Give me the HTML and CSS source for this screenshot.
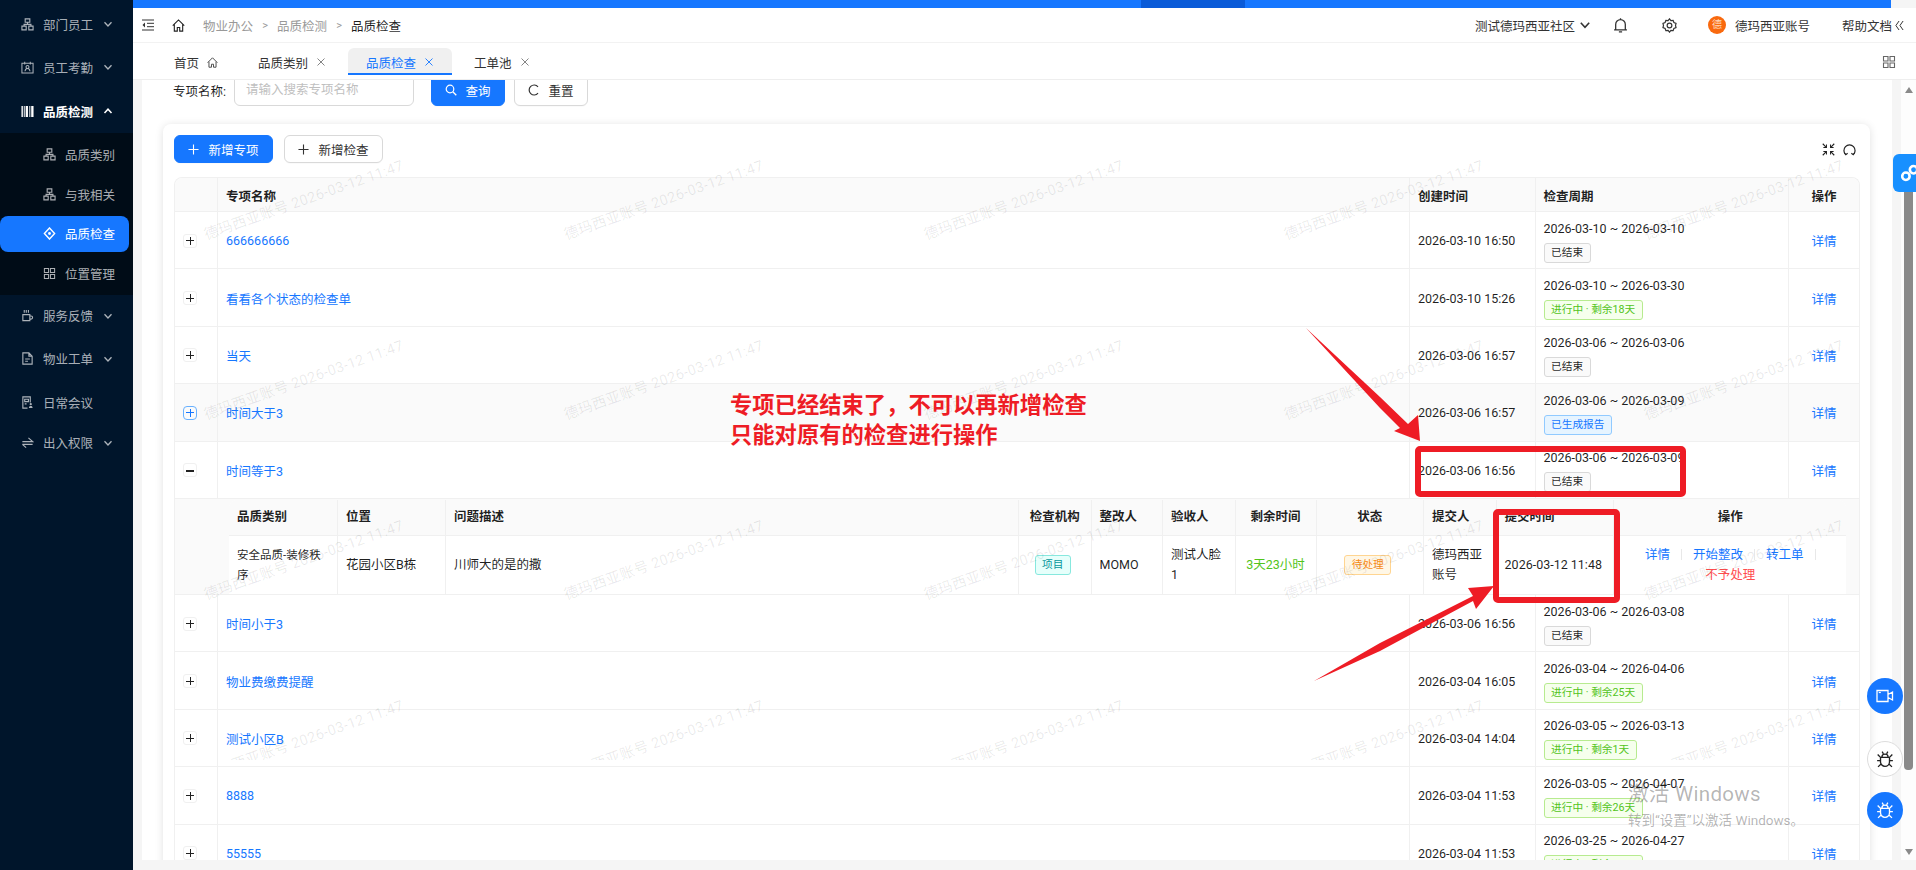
FILE: index.html
```html
<!DOCTYPE html>
<html lang="zh-CN">
<head>
<meta charset="utf-8">
<title>品质检查</title>
<link rel="stylesheet" href="styles.css">
</head>
<body>
<svg class="sprite" xmlns="http://www.w3.org/2000/svg">
  <symbol id="i-org" viewBox="0 0 14 14"><path d="M4.5 1h5v3.6h-5zM1 8.8h4.6v4H1zM8.4 8.8H13v4H8.4zM7 4.6v2.3M3.3 8.8V6.9h7.4v1.900" fill="none" stroke="currentColor" stroke-width="1.200"/></symbol>
  <symbol id="i-cal" viewBox="0 0 14 14"><path d="M1 2.5h12v10.500H1zM4 .8v3M10 .8v3M4.300 11c.3-2 1.300-3 2.700-3s2.400 1 2.700 3M7 8a1.600 1.600 0 1 0 0-3.200A1.600 1.600 0 0 0 7 8z" fill="none" stroke="currentColor" stroke-width="1.100"/></symbol>
  <symbol id="i-bar" viewBox="0 0 14 14"><path d="M.5 1h1.500v12H.5zM3 1h1v12H3zM5 1h2.500v12H5zM9 1h1v12H9zM11 1h2.500v12H11z" fill="currentColor"/></symbol>
  <symbol id="i-cup" viewBox="0 0 14 14"><path d="M2 6h7.500v6.500H2zM9.500 7.500h1.300a1.700 1.700 0 0 1 0 3.400H9.500M3.500 1v3M5.700 1v3M8 1v3" fill="none" stroke="currentColor" stroke-width="1.200"/></symbol>
  <symbol id="i-doc" viewBox="0 0 14 14"><path d="M2 1h6.500L12 4.500V13H2zM8.500 1v3.500H12M4.500 7.500h5M4.500 10h3" fill="none" stroke="currentColor" stroke-width="1.200"/></symbol>
  <symbol id="i-meet" viewBox="0 0 14 14"><path d="M10 7V1H2v12h5M4 3.500h4v2.500H4zM4 8.500h2" fill="none" stroke="currentColor" stroke-width="1.200"/><path d="M8.500 13c0-1.600.7-2.300 2-2.300s2 .7 2 2.300zM10.500 10a1.200 1.200 0 1 0 0-2.400 1.200 1.200 0 0 0 0 2.400z" fill="currentColor"/></symbol>
  <symbol id="i-swap" viewBox="0 0 14 14"><path d="M1.500 6h11L8 2M12.500 9h-11M1.500 9l4 3.500" fill="none" stroke="currentColor" stroke-width="1.200"/></symbol>
  <symbol id="i-diamond" viewBox="0 0 14 14"><path d="M7 1l5.500 6L7 13 1.500 7z" fill="none" stroke="currentColor" stroke-width="1.500"/><circle cx="7" cy="7" r="1.500" fill="currentColor"/></symbol>
  <symbol id="i-grid" viewBox="0 0 14 14"><path d="M1.500 1.500h4.500V6H1.500zM8 1.500h4.500V6H8zM1.500 8H6v4.500H1.500zM8 8h4.500v4.500H8z" fill="none" stroke="currentColor" stroke-width="1.100"/></symbol>
  <symbol id="i-down" viewBox="0 0 10 10"><path d="M1.500 3.200L5 7l3.500-3.800" fill="none" stroke="currentColor" stroke-width="1.300"/></symbol>
  <symbol id="i-up" viewBox="0 0 10 10"><path d="M1.500 7L5 3.200 8.500 7" fill="none" stroke="currentColor" stroke-width="1.500"/></symbol>
  <symbol id="i-menu" viewBox="0 0 12 12"><path d="M0 1h12M5 4.300h7M5 7.700h7M0 11h12" fill="none" stroke="currentColor" stroke-width="1"/><path d="M3 3.500L.5 6 3 8.500z" fill="currentColor"/></symbol>
  <symbol id="i-home" viewBox="0 0 14 14"><path d="M.8 7.200L7 1l6.200 6.200M2.500 6v7h3.200V9.200h2.600V13h3.200V6" fill="none" stroke="currentColor" stroke-width="1.200"/></symbol>
  <symbol id="i-bell" viewBox="0 0 14 14"><path d="M2.500 11V6a4.500 4.500 0 0 1 9 0v5zM1 11h12M5.500 13h3M7 .3v1.300" fill="none" stroke="currentColor" stroke-width="1.200"/></symbol>
  <symbol id="i-gear" viewBox="0 0 14 14"><path d="M7 .8l1.300 1.700 2.100-.3.700 2 2 .8-.5 2 .5 2-2 .8-.7 2-2.100-.3L7 13.200l-1.300-1.700-2.100.3-.7-2-2-.8.500-2-.5-2 2-.8.700-2 2.100.3z" fill="none" stroke="currentColor" stroke-width="1.100"/><circle cx="7" cy="7" r="2.200" fill="none" stroke="currentColor" stroke-width="1.100"/></symbol>
  <symbol id="i-fold" viewBox="0 0 10 12"><path d="M4.500 1L1 6l3.500 5M9 1L5.500 6 9 11" fill="none" stroke="currentColor" stroke-width="1.100"/></symbol>
  <symbol id="i-search" viewBox="0 0 12 12"><circle cx="5" cy="5" r="3.800" fill="none" stroke="currentColor" stroke-width="1.200"/><path d="M7.800 7.800L11.300 11.300" stroke="currentColor" stroke-width="1.300"/></symbol>
  <symbol id="i-reload" viewBox="0 0 12 12"><path d="M10 2.800A5 5 0 1 0 10 9.200" fill="none" stroke="currentColor" stroke-width="1.200"/></symbol>
  <symbol id="i-plus" viewBox="0 0 12 12"><path d="M6 .5v11M.5 6h11" stroke="currentColor" stroke-width="1.200"/></symbol>
  <symbol id="i-close" viewBox="0 0 10 10"><path d="M1.500 1.500l7 7M8.500 1.500l-7 7" stroke="currentColor" stroke-width=".9"/></symbol>
  <symbol id="i-shrink" viewBox="0 0 14 14"><path d="M.8 .8l3.800 3.800M13.200 .8L9.400 4.600M.8 13.200l3.800-3.800M13.200 13.200L9.400 9.400" stroke="currentColor" stroke-width="1.200"/><path d="M1.500 4.800h3.300V1.500M9.200 1.500v3.300h3.300M1.500 9.200h3.300v3.300M12.500 9.200H9.200v3.300" fill="none" stroke="currentColor" stroke-width="1.100"/></symbol>
  <symbol id="i-round" viewBox="0 0 14 14"><path d="M3 12.500A6 6 0 1 1 11 12.500" fill="none" stroke="currentColor" stroke-width="1.300"/><path d="M9 11l2 1.700 1.500-2.200M1.500 10.500L3 12.700 5 11" fill="none" stroke="currentColor" stroke-width="1.200"/></symbol>
  <symbol id="i-video" viewBox="0 0 18 14"><path d="M1 1.500h11v11H1zM12 5.500l4.500-2.500v8L12 8.500" fill="none" stroke="currentColor" stroke-width="1.300"/><path d="M2.800 3.500h2" stroke="currentColor" stroke-width="1.200"/></symbol>
  <symbol id="i-bug" viewBox="0 0 16 16"><path d="M4 6.500h8v4a4 4 0 0 1-8 0zM5.200 6.500a2.800 2.800 0 0 1 5.600 0M1.500 4l2.700 2.800M14.500 4l-2.700 2.800M1 9.500h3M12 9.500h3M1.800 15l2.700-2.500M14.200 15l-2.700-2.500M5.500 1.500l1 1.800M10.500 1.500l-1 1.800" fill="none" stroke="currentColor" stroke-width="1.200"/></symbol>
  <symbol id="i-link" viewBox="0 0 22 18"><circle cx="4.500" cy="12" r="3.400" fill="none" stroke="currentColor" stroke-width="2.400"/><circle cx="11.500" cy="6" r="3.400" fill="none" stroke="currentColor" stroke-width="2.400"/><circle cx="18.500" cy="12" r="3.400" fill="none" stroke="currentColor" stroke-width="2.400"/></symbol>
</svg>

<div class="app">
  <aside class="sidebar">
    <nav class="nav">
      <a class="nav-item"><svg class="nav-ic"><use href="#i-org"/></svg><span>部门员工</span><svg class="chev"><use href="#i-down"/></svg></a>
      <a class="nav-item"><svg class="nav-ic"><use href="#i-cal"/></svg><span>员工考勤</span><svg class="chev"><use href="#i-down"/></svg></a>
      <a class="nav-item nav-open"><svg class="nav-ic"><use href="#i-bar"/></svg><span>品质检测</span><svg class="chev"><use href="#i-up"/></svg></a>
      <div class="subnav">
        <a class="sub-item"><svg class="nav-ic"><use href="#i-org"/></svg><span>品质类别</span></a>
        <a class="sub-item"><svg class="nav-ic"><use href="#i-org"/></svg><span>与我相关</span></a>
        <a class="sub-item sub-active"><svg class="nav-ic"><use href="#i-diamond"/></svg><span>品质检查</span></a>
        <a class="sub-item"><svg class="nav-ic"><use href="#i-grid"/></svg><span>位置管理</span></a>
      </div>
      <a class="nav-item nav-after"><svg class="nav-ic"><use href="#i-cup"/></svg><span>服务反馈</span><svg class="chev"><use href="#i-down"/></svg></a>
      <a class="nav-item"><svg class="nav-ic"><use href="#i-doc"/></svg><span>物业工单</span><svg class="chev"><use href="#i-down"/></svg></a>
      <a class="nav-item nav-meet"><svg class="nav-ic"><use href="#i-meet"/></svg><span>日常会议</span></a>
      <a class="nav-item nav-last"><svg class="nav-ic"><use href="#i-swap"/></svg><span>出入权限</span><svg class="chev"><use href="#i-down"/></svg></a>
    </nav>
  </aside>

  <div class="main">
    <div class="progress">
      <div class="seg seg-a"></div><div class="seg seg-b"></div><div class="seg seg-c"></div><div class="seg-end"></div>
    </div>
    <header class="header">
      <svg class="hd-menu"><use href="#i-menu"/></svg>
      <svg class="hd-home"><use href="#i-home"/></svg>
      <div class="crumbs">
        <span class="crumb">物业办公</span><span class="crumb-sep">&gt;</span>
        <span class="crumb">品质检测</span><span class="crumb-sep">&gt;</span>
        <span class="crumb crumb-now">品质检查</span>
      </div>
      <div class="hd-right">
        <span>测试德玛西亚社区</span>
        <svg class="hd-chev"><use href="#i-down"/></svg>
        <svg class="hd-bell"><use href="#i-bell"/></svg>
        <svg class="hd-gear"><use href="#i-gear"/></svg>
        <span class="avatar">德</span>
        <span class="hd-name">德玛西亚账号</span>
        <span class="hd-help">帮助文档</span>
        <svg class="hd-fold"><use href="#i-fold"/></svg>
      </div>
    </header>
    <div class="tabs">
      <div class="tab"><span>首页</span><svg class="tab-home"><use href="#i-home"/></svg></div>
      <div class="tab"><span>品质类别</span><svg class="tab-x"><use href="#i-close"/></svg></div>
      <div class="tab tab-active"><span>品质检查</span><svg class="tab-x"><use href="#i-close"/></svg></div>
      <div class="tab"><span>工单池</span><svg class="tab-x"><use href="#i-close"/></svg></div>
      <svg class="tab-grid"><use href="#i-grid"/></svg>
    </div>

    <div class="body">
      <div class="gutter"></div>
      <div class="page">
        <form class="search">
          <label class="search-label">专项名称:</label>
          <div class="input">请输入搜索专项名称</div>
          <div class="btn btn-primary btn-search"><svg class="btn-ic-s"><use href="#i-search"/></svg>查询</div>
          <div class="btn btn-search"><svg class="btn-ic-s"><use href="#i-reload"/></svg>重置</div>
        </form>
        <section class="card">
          <div class="toolbar">
            <div class="btn btn-primary btn-add"><svg class="btn-ic"><use href="#i-plus"/></svg>新增专项</div>
            <div class="btn btn-add"><svg class="btn-ic"><use href="#i-plus"/></svg>新增检查</div>
            <div class="tools">
              <svg class="tool"><use href="#i-shrink"/></svg>
              <svg class="tool"><use href="#i-round"/></svg>
            </div>
          </div>
          <div class="table">
            <div class="row row-head">
              <div class="cell"></div><div class="cell">专项名称</div><div class="cell">创建时间</div><div class="cell">检查周期</div><div class="cell cell-c">操作</div>
            </div>
            <div class="row">
              <div class="cell"><span class="exp"></span></div><div class="cell"><a class="link">666666666</a></div><div class="cell">2026-03-10 16:50</div>
              <div class="cell cell-period"><span>2026-03-10 ~ 2026-03-10</span><span class="tag tag-gray">已结束</span></div><div class="cell cell-c"><a class="link">详情</a></div>
            </div>
            <div class="row">
              <div class="cell"><span class="exp"></span></div><div class="cell"><a class="link">看看各个状态的检查单</a></div><div class="cell">2026-03-10 15:26</div>
              <div class="cell cell-period"><span>2026-03-10 ~ 2026-03-30</span><span class="tag tag-green">进行中 · 剩余18天</span></div><div class="cell cell-c"><a class="link">详情</a></div>
            </div>
            <div class="row">
              <div class="cell"><span class="exp"></span></div><div class="cell"><a class="link">当天</a></div><div class="cell">2026-03-06 16:57</div>
              <div class="cell cell-period"><span>2026-03-06 ~ 2026-03-06</span><span class="tag tag-gray">已结束</span></div><div class="cell cell-c"><a class="link">详情</a></div>
            </div>
            <div class="row row-hover">
              <div class="cell"><span class="exp exp-hover"></span></div><div class="cell"><a class="link">时间大于3</a></div><div class="cell">2026-03-06 16:57</div>
              <div class="cell cell-period"><span>2026-03-06 ~ 2026-03-09</span><span class="tag tag-blue">已生成报告</span></div><div class="cell cell-c"><a class="link">详情</a></div>
            </div>
            <div class="row">
              <div class="cell"><span class="exp exp-open"></span></div><div class="cell"><a class="link">时间等于3</a></div><div class="cell">2026-03-06 16:56</div>
              <div class="cell cell-period"><span>2026-03-06 ~ 2026-03-09</span><span class="tag tag-gray">已结束</span></div><div class="cell cell-c"><a class="link">详情</a></div>
            </div>
            <div class="detail">
              <div class="subtable">
                <div class="sub-row sub-head">
                  <div class="sc">品质类别</div><div class="sc">位置</div><div class="sc">问题描述</div><div class="sc sc-c">检查机构</div><div class="sc">整改人</div><div class="sc">验收人</div><div class="sc sc-c">剩余时间</div><div class="sc sc-c">状态</div><div class="sc">提交人</div><div class="sc">提交时间</div><div class="sc sc-c">操作</div>
                </div>
                <div class="sub-row sub-body">
                  <div class="sc sc-small">安全品质-装修秩序</div><div class="sc">花园小区B栋</div><div class="sc">川师大的是的撒</div>
                  <div class="sc sc-c sc-shift"><span class="tag tag-cyan">项目</span></div><div class="sc">MOMO</div><div class="sc">测试人脸1</div>
                  <div class="sc sc-c sc-green">3天23小时</div><div class="sc sc-c sc-shift"><span class="tag tag-orange">待处理</span></div><div class="sc">德玛西亚账号</div><div class="sc">2026-03-12 11:48</div>
                  <div class="sc sc-ops">
                    <div class="ops"><a class="link">详情</a><i class="op-div"></i><a class="link">开始整改</a><i class="op-div"></i><a class="link">转工单</a><i class="op-div"></i></div>
                    <a class="danger">不予处理</a>
                  </div>
                </div>
              </div>
            </div>
            <div class="row">
              <div class="cell"><span class="exp"></span></div><div class="cell"><a class="link">时间小于3</a></div><div class="cell">2026-03-06 16:56</div>
              <div class="cell cell-period"><span>2026-03-06 ~ 2026-03-08</span><span class="tag tag-gray">已结束</span></div><div class="cell cell-c"><a class="link">详情</a></div>
            </div>
            <div class="row">
              <div class="cell"><span class="exp"></span></div><div class="cell"><a class="link">物业费缴费提醒</a></div><div class="cell">2026-03-04 16:05</div>
              <div class="cell cell-period"><span>2026-03-04 ~ 2026-04-06</span><span class="tag tag-green">进行中 · 剩余25天</span></div><div class="cell cell-c"><a class="link">详情</a></div>
            </div>
            <div class="row">
              <div class="cell"><span class="exp"></span></div><div class="cell"><a class="link">测试小区B</a></div><div class="cell">2026-03-04 14:04</div>
              <div class="cell cell-period"><span>2026-03-05 ~ 2026-03-13</span><span class="tag tag-green">进行中 · 剩余1天</span></div><div class="cell cell-c"><a class="link">详情</a></div>
            </div>
            <div class="row">
              <div class="cell"><span class="exp"></span></div><div class="cell"><a class="link">8888</a></div><div class="cell">2026-03-04 11:53</div>
              <div class="cell cell-period"><span>2026-03-05 ~ 2026-04-07</span><span class="tag tag-green">进行中 · 剩余26天</span></div><div class="cell cell-c"><a class="link">详情</a></div>
            </div>
            <div class="row">
              <div class="cell"><span class="exp"></span></div><div class="cell"><a class="link">55555</a></div><div class="cell">2026-03-04 11:53</div>
              <div class="cell cell-period"><span>2026-03-25 ~ 2026-04-27</span><span class="tag tag-green">进行中 · 剩余33天</span></div><div class="cell cell-c"><a class="link">详情</a></div>
            </div>
          </div>
        </section>
      </div>
      <div class="gutter"></div>
      <div class="scrollbar">
        <i class="arrow-up"></i>
        <i class="thumb"></i>
        <i class="arrow-down"></i>
      </div>
    </div>
    <div class="foot"></div>
  </div>

  <div class="watermarks">
    <span>德玛西亚账号 2026-03-12 11:47</span><span>德玛西亚账号 2026-03-12 11:47</span><span>德玛西亚账号 2026-03-12 11:47</span><span>德玛西亚账号 2026-03-12 11:47</span><span>德玛西亚账号 2026-03-12 11:47</span>
    <span>德玛西亚账号 2026-03-12 11:47</span><span>德玛西亚账号 2026-03-12 11:47</span><span>德玛西亚账号 2026-03-12 11:47</span><span>德玛西亚账号 2026-03-12 11:47</span><span>德玛西亚账号 2026-03-12 11:47</span>
    <span>德玛西亚账号 2026-03-12 11:47</span><span>德玛西亚账号 2026-03-12 11:47</span><span>德玛西亚账号 2026-03-12 11:47</span><span>德玛西亚账号 2026-03-12 11:47</span><span>德玛西亚账号 2026-03-12 11:47</span>
    <span>德玛西亚账号 2026-03-12 11:47</span><span>德玛西亚账号 2026-03-12 11:47</span><span>德玛西亚账号 2026-03-12 11:47</span><span>德玛西亚账号 2026-03-12 11:47</span><span>德玛西亚账号 2026-03-12 11:47</span>
  </div>

  <svg class="marks" viewBox="0 0 1916 870" xmlns="http://www.w3.org/2000/svg">
    <rect x="1418" y="449" width="265" height="45" rx="2"/>
    <rect x="1496" y="512" width="121" height="88" rx="2"/>
    <polygon class="arrow" points="1306,328 1380,397 1408,424 1418,415 1420,441 1394,431 1400,428 1380,408"/>
    <polygon class="arrow" points="1314,681 1380,643 1473,596 1468,588 1494,586 1476,609 1473,601 1380,651"/>
  </svg>
  <div class="note">专项已经结束了，不可以再新增检查<br>只能对原有的检查进行操作</div>

  <a class="fab-tab"><svg class="fab-link"><use href="#i-link"/></svg></a>
  <a class="fab fab-video"><svg class="fab-ic-v"><use href="#i-video"/></svg></a>
  <a class="fab fab-white"><svg class="fab-ic"><use href="#i-bug"/></svg></a>
  <a class="fab fab-bug"><svg class="fab-ic"><use href="#i-bug"/></svg></a>

  <div class="activate">
    <div class="activate-a">激活 Windows</div>
    <div class="activate-b">转到“设置”以激活 Windows。</div>
  </div>
</div>
</body>
</html>
```
FILE: styles.css
```css
* { box-sizing: border-box; }
html, body { margin: 0; height: 100%; overflow: hidden; }
body {
  font-family: Roboto, "Noto Sans CJK SC", sans-serif;
  font-size: 12.5px;
  color: rgba(0, 0, 0, .88);
  background: #fff;
}
a { color: inherit; text-decoration: none; }
i { display: block; font-style: normal; }
svg { display: block; flex: none; }
.sprite { position: absolute; width: 0; height: 0; }

.app { position: relative; display: flex; width: 1916px; height: 870px; overflow: hidden; }

/* sidebar */
.sidebar { width: 133px; flex: none; background: #00152b; color: rgba(255, 255, 255, .68); }
.nav { display: flex; flex-direction: column; padding-top: 6px; }
.nav-item { display: flex; align-items: center; height: 36px; margin-bottom: 7px; padding-left: 21px; }
.nav-ic { width: 13px; height: 13px; margin-right: 9px; }
.chev { width: 10px; height: 10px; margin-left: 10px; }
.nav-open { color: #fff; font-weight: 600; margin-top: 1px; margin-bottom: 4px; }
.subnav { display: flex; flex-direction: column; gap: 3.5px; padding: 3.5px 0; background: #000c17; margin-bottom: 3px; }
.sub-item { display: flex; align-items: center; height: 36px; width: 129px; padding-left: 43px; border-radius: 0 8px 8px 0; }
.sub-active { background: #1677ff; color: #fff; border-radius: 8px; }
.nav-meet { margin-top: 1px; margin-bottom: 4px; }

/* main column */
.main { flex: 1; min-width: 0; display: flex; flex-direction: column; background: #f5f5f5; }
.progress { display: flex; height: 8px; flex: none; }
.seg-a { width: 1008px; background: #1677ff; }
.seg-b { width: 104px; background: #0a5bd8; }
.seg-c { width: 646px; background: #1677ff; }
.seg-end { flex: 1; background: #f5f5f5; }

.header { display: flex; align-items: center; height: 35px; flex: none; padding-left: 9px; background: #fff; border-bottom: 1px solid #f2f2f2; }
.hd-menu { width: 12px; height: 12px; margin-right: 18px; color: #333; }
.hd-home { width: 13px; height: 13px; margin-right: 18px; color: #222; }
.crumbs { display: flex; align-items: center; color: #999; }
.crumb-sep { width: 24px; text-align: center; font-size: 11px; }
.crumb-now { color: rgba(0, 0, 0, .88); }
.hd-right { display: flex; align-items: center; margin-left: auto; padding-right: 12px; color: #333; }
.hd-chev { width: 12px; height: 12px; margin-left: 4px; margin-right: 22px; }
.hd-bell { width: 15px; height: 15px; margin-right: 34px; }
.hd-gear { width: 15px; height: 15px; margin-right: 31px; }
.avatar { width: 18px; height: 18px; border-radius: 50%; margin-right: 9px; background: #f9690e; color: #ffd9bd; font-size: 10px; line-height: 18px; text-align: center; }
.hd-name { margin-right: 32px; }
.hd-fold { width: 9px; height: 11px; margin-left: 3px; }

.tabs { display: flex; gap: 4px; height: 37px; flex: none; padding-left: 23px; background: #fff; border-bottom: 1px solid #eee; position: relative; }
.tab { display: flex; align-items: center; height: 27px; margin-top: 5px; padding: 3px 18px 0; border-radius: 6px 6px 0 0; border-bottom: 2px solid transparent; color: #333; }
.tab-active { background: #f0f0f0; border-bottom-color: #1677ff; color: #1677ff; }
.tab-home { width: 11px; height: 11px; margin-left: 8px; color: #444; }
.tab-x { width: 10px; height: 10px; margin-left: 8px; color: #777; }
.tab-active .tab-x { color: #1677ff; }
.tab-grid { width: 14px; height: 14px; margin-left: auto; margin-right: 20px; margin-top: 12px; color: #666; }

.body { flex: 1; min-height: 0; display: flex; }
.gutter { width: 9px; flex: none; background: #f5f5f5; }
.page { width: 1750px; flex: none; overflow: hidden; background: #fff; padding: 0 22px 0 21px; }

.search { display: flex; align-items: center; height: 32px; margin-top: -6px; padding-left: 10px; }
.search-label { width: 61px; }
.input { width: 180px; height: 32px; line-height: 30px; padding-left: 11px; margin-right: 17px; border: 1px solid #d9d9d9; border-radius: 6px; color: #bfbfbf; }
.btn { display: flex; align-items: center; justify-content: center; border: 1px solid #d9d9d9; border-radius: 6px; background: #fff; color: #333; box-shadow: 0 1px 0 rgba(0, 0, 0, .02); }
.btn-primary { background: #1677ff; border-color: #1677ff; color: #fff; }
.btn-search { width: 74px; height: 32px; margin-right: 9px; }
.btn-ic-s { width: 12px; height: 12px; margin-right: 8px; }
.btn-add { width: 99px; height: 28px; }
.btn-ic { width: 11px; height: 11px; margin-right: 9px; }

.card { margin-top: 18px; padding: 11px 10px 0 11px; background: #fff; border-radius: 8px 8px 0 0; box-shadow: 0 1px 8px rgba(0, 0, 0, .12); }
.toolbar { display: flex; align-items: center; gap: 11px; height: 28px; margin-bottom: 14px; }
.tools { display: flex; gap: 8px; margin-left: auto; margin-right: 4px; }
.tool { width: 13px; height: 13px; color: #222; }

.table { border-left: 1px solid #f0f0f0; border-top: 1px solid #f0f0f0; border-right: 1px solid #f0f0f0; border-radius: 8px 8px 0 0; }
.row { display: grid; grid-template-columns: 43px 1192px 125.5px 253px 71px; height: 57.4px; border-bottom: 1px solid #f0f0f0; }
.row-head { height: 34px; background: #fafafa; font-weight: 600; border-radius: 8px 8px 0 0; }
.row-hover { background: #fafafa; }
.cell { display: flex; align-items: center; padding-left: 8px; padding-top: 1px; border-right: 1px solid #f0f0f0; min-width: 0; }
.cell:last-child { border-right: 0; }
.cell-c { justify-content: center; padding-left: 0; }
.cell-period { flex-direction: column; align-items: flex-start; justify-content: center; gap: 4px; line-height: 20px; }
.link { color: #1677ff; }
.danger { color: #ff4d4f; }

.exp { position: relative; display: block; width: 14px; height: 14px; border: 1px solid #f0f0f0; border-radius: 3px; background: #fff; color: #222; }
.exp::before, .exp::after { content: ""; position: absolute; background: currentColor; }
.exp::before { left: 2px; right: 2px; top: 5.5px; height: 1px; }
.exp::after { top: 2px; bottom: 2px; left: 5.5px; width: 1px; }
.exp-hover { border-color: #69b1ff; color: #1677ff; background: transparent; border-radius: 4px; }
.exp-open::after { display: none; }
.exp-open::before { height: 2px; }

.tag { display: inline-block; height: 20px; line-height: 18px; padding: 0 6.5px; border: 1px solid; border-radius: 3px; font-size: 10.7px; white-space: nowrap; }
.tag-gray { background: #fafafa; border-color: #d9d9d9; color: rgba(0, 0, 0, .88); }
.tag-green { background: #f6ffed; border-color: #b7eb8f; color: #52c41a; }
.tag-blue { background: #e6f4ff; border-color: #91caff; color: #1677ff; }
.tag-cyan { background: #e6fffb; border-color: #87e8de; color: #08979c; }
.tag-orange { background: #fff7e6; border-color: #ffd591; color: #fa8c16; }

.detail { height: 96px; padding: 1px 13px 1px 54px; background: #fafafa; border-bottom: 1px solid #f0f0f0; }
.subtable { background: #fff; border-radius: 8px 8px 0 0; height: 94px; }
.sub-row { display: grid; grid-template-columns: 109px 108px 573px 72.500px 71.500px 72.500px 81px 107.500px 72.600px 117px 233.300px; }
.sub-head { height: 36px; background: #fafafa; font-weight: 600; border-bottom: 1px solid #f0f0f0; border-radius: 8px 8px 0 0; }
.sub-body { height: 58px; }
.sc { display: flex; align-items: center; padding: 0 8px; line-height: 20px; border-right: 1px solid #f0f0f0; min-width: 0; }
.sc:last-child { border-right: 0; }
.sc-c { justify-content: center; }
.sc-shift { padding: 0 12px 0 8px; }
.sc-small { font-size: 11.5px; }
.sc-green { color: #52c41a; padding: 0; }
.sc-ops { flex-direction: column; justify-content: center; align-items: center; padding: 0; }
.ops { display: flex; align-items: center; }
.op-div { width: 1px; height: 11px; background: #e8e8e8; margin: 0 11px; }
.op-div:last-child { margin-right: 0; }

.scrollbar { flex: 1; display: flex; flex-direction: column; align-items: center; background: #fdfdfd; }
.arrow-up { width: 0; height: 0; margin-top: 7px; border-left: 4.500px solid transparent; border-right: 4.500px solid transparent; border-bottom: 6px solid #8a8a8a; }
.thumb { width: 9px; height: 600px; margin-top: 77px; background: #8a8a8a; border-radius: 0 0 4px 4px; }
.arrow-down { width: 0; height: 0; margin-top: auto; margin-bottom: 5px; border-left: 4.500px solid transparent; border-right: 4.500px solid transparent; border-top: 6px solid #8a8a8a; }
.foot { height: 10px; flex: none; background: #f5f5f5; }

/* things that lie over the page */
.watermarks { position: absolute; left: 123px; top: 108px; width: 1800px; height: 652px; overflow: hidden; display: grid; grid-template-columns: repeat(5, 360px); grid-auto-rows: 180px; pointer-events: none; }
.watermarks span { display: flex; align-items: center; justify-content: center; white-space: nowrap; font-size: 14.5px; letter-spacing: .3px; color: rgba(0, 0, 0, .09); transform: rotate(-19.5deg); }

.marks { position: absolute; left: 0; top: 0; width: 1916px; height: 870px; pointer-events: none; }
.marks rect { fill: none; stroke: #ee1c25; stroke-width: 6; }
.marks .arrow { fill: #ee1c25; }
.note { position: absolute; left: 730px; top: 391px; font-size: 22.300px; line-height: 29.500px; font-weight: 700; color: #ee1c25; white-space: nowrap; }

.fab-tab { position: absolute; left: 1893px; top: 154px; width: 23px; height: 38px; overflow: hidden; border-radius: 6px 0 0 6px; background: #1890ff; color: #fff; }
.fab-link { width: 24px; height: 20px; margin: 9px 0 0 8px; }
.fab { position: absolute; left: 1867px; display: flex; align-items: center; justify-content: center; width: 36px; height: 36px; border-radius: 50%; background: #1677ff; color: #fff; }
.fab-video { top: 678px; }
.fab-white { top: 741px; background: #fff; border: 1px solid #ddd; color: #222; }
.fab-bug { top: 792px; }
.fab-ic { width: 18px; height: 18px; }
.fab-ic-v { width: 18px; height: 14px; }

.activate { position: absolute; left: 1628px; top: 780px; color: rgba(0, 0, 0, .3); pointer-events: none; white-space: nowrap; }
.activate-a { font-size: 20.500px; line-height: 28px; letter-spacing: .3px; }
.activate-b { margin-top: 3px; font-size: 13.500px; line-height: 18px; }
```
